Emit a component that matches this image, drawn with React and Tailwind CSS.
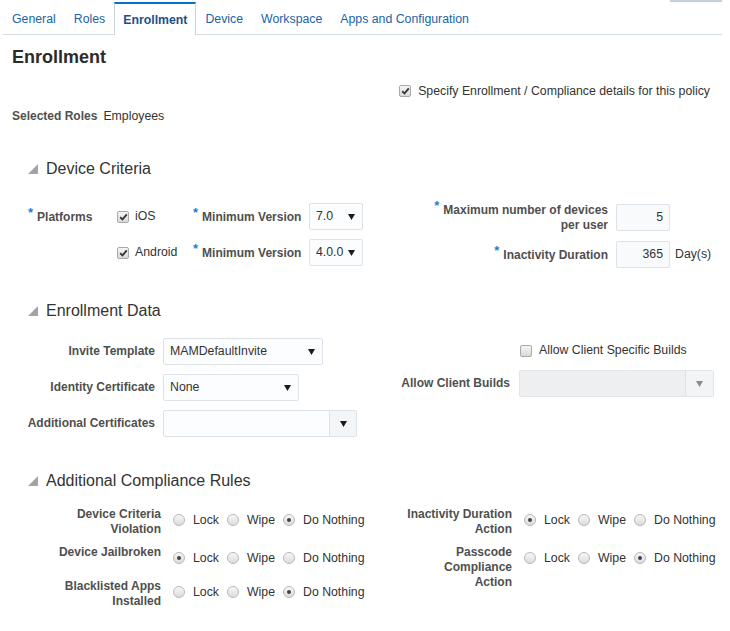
import React from "react";

const tabs = ["General", "Roles", "Enrollment", "Device", "Workspace", "Apps and Configuration"];
const actions = ["Lock", "Wipe", "Do Nothing"];

function Arrow({ color = "#1a1a1a" }) {
  return (
    <svg width="7" height="6" viewBox="0 0 7 6">
      <path d="M0 0 H7 L3.5 6 Z" fill={color} />
    </svg>
  );
}

function Check({ checked }) {
  return (
    <span className="inline-flex h-[12px] w-[12px] shrink-0 items-center justify-center rounded-[2px] border border-[#a9a9a9] bg-linear-to-b from-[#f5f5f5] to-[#dadada]">
      {checked && (
        <svg width="9" height="8" viewBox="0 0 9 8">
          <path d="M1.2 4.2 L3.5 6.4 L7.8 1.3" stroke="#3a3a3a" strokeWidth="1.9" fill="none" />
        </svg>
      )}
    </span>
  );
}

function Radio({ on }) {
  return (
    <span className="inline-flex h-[12px] w-[12px] shrink-0 items-center justify-center rounded-full border border-[#b8b8b8] bg-linear-to-b from-[#f7f7f7] to-[#dcdcdc]">
      {on && <span className="h-[4px] w-[4px] rounded-full bg-[#444]" />}
    </span>
  );
}

function Req() {
  return <span className="relative -top-[4px] mr-[4px] text-[13px] font-bold text-[#1c7fd6]">*</span>;
}

function Label({ children }) {
  return <span className="text-[12px] font-bold text-[#4f4f4f]">{children}</span>;
}

function SectionTitle({ children, className }) {
  return (
    <div className={`flex h-[20px] items-center pl-[28px] ${className}`}>
      <svg width="10" height="10" viewBox="0 0 10 10">
        <path d="M10 0 V10 H0 Z" fill="#a3a3a3" />
      </svg>
      <span className="ml-[8px] text-[16px] text-[#333]">{children}</span>
    </div>
  );
}

function Select({ value, width }) {
  return (
    <div className={`flex h-[27px] items-center justify-between rounded-[2px] border border-[#dde3e8] bg-[#fcfdfe] pl-[6px] pr-[7px] text-[#333] ${width}`}>
      <span>{value}</span>
      <Arrow />
    </div>
  );
}

function Input({ value }) {
  return (
    <div className="flex h-[27px] w-[54px] items-center justify-end rounded-[2px] border border-[#dde3e8] bg-[#f8fafc] pr-[6px] text-[#333]">
      {value}
    </div>
  );
}

function RuleRow({ lines, pick, labelW }) {
  return (
    <div className="flex items-start">
      <div className={`text-right text-[12px] font-bold leading-[15px] text-[#4f4f4f] ${labelW}`}>
        {lines.map(l => (
          <div key={l}>{l}</div>
        ))}
      </div>
      <div className="ml-[12px] flex h-[26px] items-center">
        {actions.map((a, i) => (
          <div key={a} className={`flex items-center gap-[8px] ${i > 0 ? "ml-[8px]" : ""}`}>
            <Radio on={i === pick} />
            <span className="text-[#333]">{a}</span>
          </div>
        ))}
      </div>
    </div>
  );
}

export default function App() {
  return (
    <div className="h-[631px] w-[730px] overflow-hidden bg-white font-['Liberation_Sans',Arial,sans-serif] text-[12.3px] text-[#333]">
      {/* bottom edge of the toolbar button above the tabs */}
      <div className="flex h-[2px]">
        <div className="ml-[670px] h-[2px] w-[52px] bg-[#c6cfd7]" />
      </div>

      {/* ═══════════ TABS ═══════════ */}
      <div className="ml-[3px] mr-[8px] flex border-b border-[#d5dde4]">
        {tabs.map(t =>
          t === "Enrollment" ? (
            <div key={t} className="-mb-px flex h-[33px] items-center border-x border-t-2 border-x-[#c9d3dc] border-t-[#0572ce] bg-white px-[8px] pt-px font-bold text-[#1e5088]">
              {t}
            </div>
          ) : (
            <div key={t} className="flex h-[32px] items-center border-t-2 border-transparent px-[9px] pt-px text-[#1b63a8]">
              {t}
            </div>
          )
        )}
      </div>

      <h1 className="mt-[11px] pl-[12px] text-[18px] font-bold leading-[22px] text-[#2b2b2b]">Enrollment</h1>

      <div className="mt-[15px] flex h-[16px] items-center justify-end gap-[7px] pr-[20px]">
        <Check checked />
        <span>Specify Enrollment / Compliance details for this policy</span>
      </div>

      <div className="mt-[9px] flex h-[16px] items-center gap-[6px] pl-[12px]">
        <Label>Selected Roles</Label>
        <span>Employees</span>
      </div>

      {/* ═══════════ DEVICE CRITERIA ═══════════ */}
      <SectionTitle className="mt-[35px]">Device Criteria</SectionTitle>
      <div className="mt-[24px] flex pl-[28px]">
        <div className="grid grid-cols-[89px_76px_116px_54px] grid-rows-[27px_27px] items-center gap-y-[9px]">
          <div className="flex items-center">
            <Req />
            <Label>Platforms</Label>
          </div>
          <div className="flex items-center gap-[6px]">
            <Check checked />
            <span>iOS</span>
          </div>
          <div className="flex items-center">
            <Req />
            <Label>Minimum Version</Label>
          </div>
          <Select value="7.0" width="w-[54px]" />
          <div />
          <div className="flex items-center gap-[6px]">
            <Check checked />
            <span>Android</span>
          </div>
          <div className="flex items-center">
            <Req />
            <Label>Minimum Version</Label>
          </div>
          <Select value="4.0.0" width="w-[54px]" />
        </div>

        <div className="ml-[7px] flex flex-col gap-[10px] pt-px">
          <div className="flex h-[27px] items-center">
            <div className="w-[238px] text-right leading-[15px]">
              <Req />
              <Label>
                Maximum number of devices
                <br />
                per user
              </Label>
            </div>
            <div className="ml-[8px]">
              <Input value="5" />
            </div>
          </div>
          <div className="flex h-[27px] items-center">
            <div className="w-[238px] text-right">
              <Req />
              <Label>Inactivity Duration</Label>
            </div>
            <div className="ml-[8px]">
              <Input value="365" />
            </div>
            <span className="ml-[5px]">Day(s)</span>
          </div>
        </div>
      </div>

      {/* ═══════════ ENROLLMENT DATA ═══════════ */}
      <SectionTitle className="mt-[33px]">Enrollment Data</SectionTitle>
      <div className="mt-[17px] flex">
        <div className="flex flex-col gap-[9px]">
          <div className="flex h-[27px] items-center">
            <div className="w-[155px] text-right">
              <Label>Invite Template</Label>
            </div>
            <div className="ml-[8px]">
              <Select value="MAMDefaultInvite" width="w-[160px]" />
            </div>
          </div>
          <div className="flex h-[27px] items-center">
            <div className="w-[155px] text-right">
              <Label>Identity Certificate</Label>
            </div>
            <div className="ml-[8px]">
              <Select value="None" width="w-[136px]" />
            </div>
          </div>
          <div className="flex h-[27px] items-center">
            <div className="w-[155px] text-right">
              <Label>Additional Certificates</Label>
            </div>
            <div className="ml-[8px] flex h-[27px] w-[194px] rounded-[2px] border border-[#dde3e8] bg-[#fcfdfe]">
              <div className="flex-1" />
              <div className="flex w-[27px] items-center justify-center border-l border-[#dde3e8] bg-[#f3f5f7]">
                <Arrow />
              </div>
            </div>
          </div>
        </div>

        <div className="ml-[23px]">
          <div className="flex h-[25px] items-center gap-[7px] pl-[140px]">
            <Check />
            <span>Allow Client Specific Builds</span>
          </div>
          <div className="mt-[7px] flex h-[27px] items-center">
            <div className="w-[130px] text-right">
              <Label>Allow Client Builds</Label>
            </div>
            <div className="ml-[9px] flex h-[27px] w-[195px] rounded-[2px] border border-[#e2e5e8] bg-[#eeeff1]">
              <div className="flex-1" />
              <div className="flex w-[28px] items-center justify-center border-l border-[#e0e3e6] bg-[#f3f4f5]">
                <Arrow color="#8c8c8c" />
              </div>
            </div>
          </div>
        </div>
      </div>

      {/* ═══════════ ADDITIONAL COMPLIANCE RULES ═══════════ */}
      <SectionTitle className="mt-[34px]">Additional Compliance Rules</SectionTitle>
      <div className="mt-[16px] flex">
        <div className="flex w-[390px] flex-col gap-[8px]">
          <RuleRow lines={["Device Criteria", "Violation"]} pick={2} labelW="w-[161px]" />
          <RuleRow lines={["Device Jailbroken"]} pick={0} labelW="w-[161px]" />
          <RuleRow lines={["Blacklisted Apps", "Installed"]} pick={2} labelW="w-[161px]" />
        </div>
        <div className="flex flex-col gap-[8px]">
          <RuleRow lines={["Inactivity Duration", "Action"]} pick={0} labelW="w-[122px]" />
          <RuleRow lines={["Passcode", "Compliance", "Action"]} pick={2} labelW="w-[122px]" />
        </div>
      </div>
    </div>
  );
}
